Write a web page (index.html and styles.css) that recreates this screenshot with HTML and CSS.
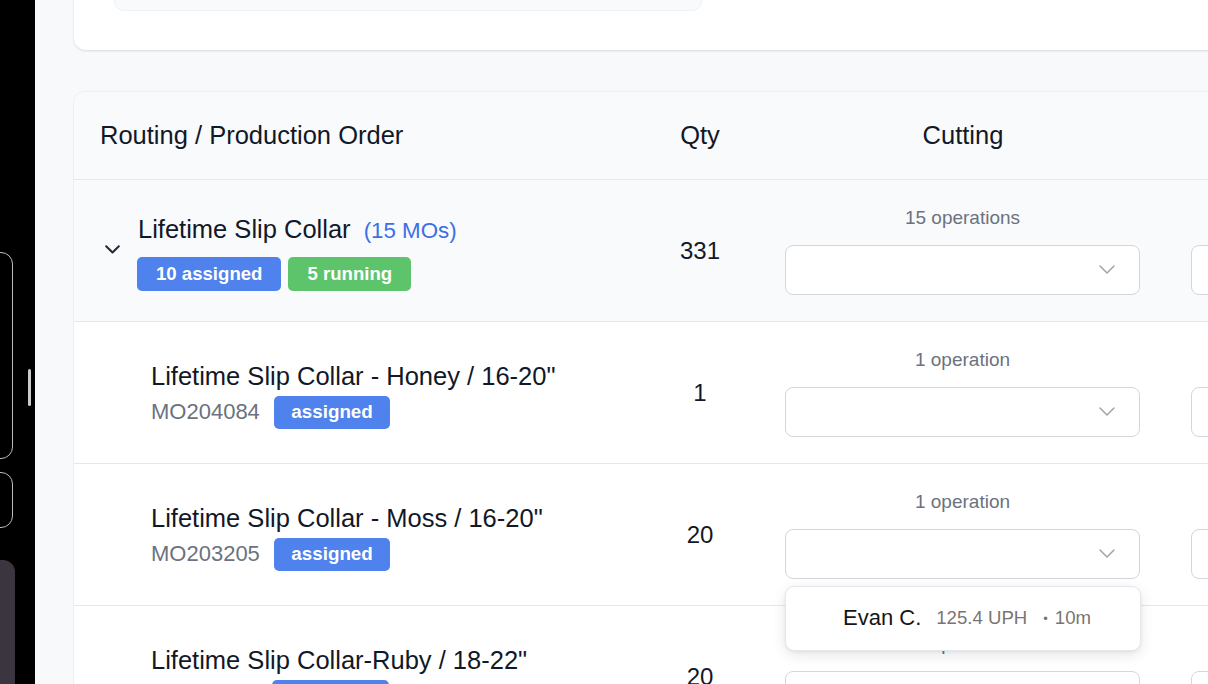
FILE: index.html
```html
<!DOCTYPE html>
<html>
<head>
<meta charset="utf-8">
<link rel="stylesheet" href="styles.css">
</head>
<body>
<aside class="strip">
  <div class="strip-col">
    <div class="ghost ghost-tall"></div>
    <div class="ghost ghost-short"></div>
    <div class="dock"></div>
  </div>
  <div class="handle"></div>
</aside>
<main class="main">
  <section class="top-card">
    <div class="top-inner"></div>
  </section>
  <section class="table">
    <div class="row head">
      <div class="cell c-name">Routing / Production Order</div>
      <div class="cell c-qty">Qty</div>
      <div class="cell c-op">Cutting</div>
      <div class="cell c-op"></div>
    </div>

    <div class="row group">
      <div class="cell c-name">
        <span class="toggle"><svg width="15" height="9" viewBox="0 0 15 9"><path d="M1.2 1.2L7.5 7.5L13.8 1.2" fill="none" stroke="#1f2937" stroke-width="2" stroke-linecap="round" stroke-linejoin="round"/></svg></span>
        <div class="name-block">
          <div class="title">Lifetime Slip Collar <span class="count">(15 MOs)</span></div>
          <div class="badges">
            <span class="badge blue">10 assigned</span>
            <span class="badge green">5 running</span>
          </div>
        </div>
      </div>
      <div class="cell c-qty">331</div>
      <div class="cell c-op">
        <div class="ops">15 operations</div>
        <div class="select-wrap"><div class="select"><svg width="16" height="9" viewBox="0 0 16 9"><path d="M1 1L8 8L15 1" fill="none" stroke="#a3a3a3" stroke-width="1.5" stroke-linecap="round" stroke-linejoin="round"/></svg></div></div>
      </div>
      <div class="cell c-op">
        <div class="ops"></div>
        <div class="select-wrap"><div class="select"></div></div>
      </div>
    </div>

    <div class="row">
      <div class="cell c-name child">
        <div class="name-block">
          <div class="title">Lifetime Slip Collar - Honey / 16-20"</div>
          <div class="mo-line"><span class="mo">MO204084</span><span class="badge blue">assigned</span></div>
        </div>
      </div>
      <div class="cell c-qty">1</div>
      <div class="cell c-op">
        <div class="ops">1 operation</div>
        <div class="select-wrap"><div class="select"><svg width="16" height="9" viewBox="0 0 16 9"><path d="M1 1L8 8L15 1" fill="none" stroke="#a3a3a3" stroke-width="1.5" stroke-linecap="round" stroke-linejoin="round"/></svg></div></div>
      </div>
      <div class="cell c-op">
        <div class="ops"></div>
        <div class="select-wrap"><div class="select"></div></div>
      </div>
    </div>

    <div class="row">
      <div class="cell c-name child">
        <div class="name-block">
          <div class="title">Lifetime Slip Collar - Moss / 16-20"</div>
          <div class="mo-line"><span class="mo">MO203205</span><span class="badge blue">assigned</span></div>
        </div>
      </div>
      <div class="cell c-qty">20</div>
      <div class="cell c-op">
        <div class="ops">1 operation</div>
        <div class="select-wrap">
          <div class="select"><svg width="16" height="9" viewBox="0 0 16 9"><path d="M1 1L8 8L15 1" fill="none" stroke="#a3a3a3" stroke-width="1.5" stroke-linecap="round" stroke-linejoin="round"/></svg></div>
          <div class="menu">
            <span class="who">Evan C.</span>
            <span class="rate">125.4 UPH</span>
            <span class="dot">•</span>
            <span class="dur">10m</span>
          </div>
        </div>
      </div>
      <div class="cell c-op">
        <div class="ops"></div>
        <div class="select-wrap"><div class="select"></div></div>
      </div>
    </div>

    <div class="row">
      <div class="cell c-name child">
        <div class="name-block">
          <div class="title">Lifetime Slip Collar-Ruby / 18-22"</div>
          <div class="mo-line"><span class="mo">MO203117</span><span class="badge blue">assigned</span></div>
        </div>
      </div>
      <div class="cell c-qty">20</div>
      <div class="cell c-op">
        <div class="ops">1 operation</div>
        <div class="select-wrap"><div class="select"><svg width="16" height="9" viewBox="0 0 16 9"><path d="M1 1L8 8L15 1" fill="none" stroke="#a3a3a3" stroke-width="1.5" stroke-linecap="round" stroke-linejoin="round"/></svg></div></div>
      </div>
      <div class="cell c-op">
        <div class="ops"></div>
        <div class="select-wrap"><div class="select"></div></div>
      </div>
    </div>
  </section>
</main>
</body>
</html>
```
FILE: styles.css
```css
* { box-sizing: border-box; }
html, body { margin: 0; padding: 0; }
body {
  width: 1208px;
  height: 684px;
  overflow: hidden;
  display: flex;
  background: #f8f9fb;
  font-family: "Liberation Sans", Arial, sans-serif;
  color: #111827;
}

/* left dark strip */
.strip {
  width: 35px;
  flex: 0 0 35px;
  height: 684px;
  background: #000;
  display: flex;
  align-items: flex-start;
  overflow: hidden;
}
.strip-col {
  width: 15px;
  flex: 0 0 15px;
  padding-top: 252px;
  display: flex;
  flex-direction: column;
}
.ghost {
  width: 33px;
  margin-left: -20px;
  border: 1px solid #bdbdbd;
  border-radius: 12px;
}
.ghost-tall { height: 207px; }
.ghost-short { height: 56px; margin-top: 13px; }
.dock {
  width: 35px;
  margin-left: -20px;
  margin-top: 32px;
  height: 160px;
  border-radius: 12px;
  background: #3b3540;
}
.handle {
  margin-left: 13px;
  margin-top: 369px;
  width: 3px;
  height: 37px;
  border-radius: 2px;
  background: #cbcbcb;
}

/* main */
.main {
  flex: 1;
  min-width: 0;
  overflow: hidden;
  padding-left: 38px;
}
.top-card {
  width: 1300px;
  margin-left: 1px;
  margin-top: -100px;
  height: 150px;
  padding: 40px 0 0 40px;
  background: #fff;
  border-radius: 12px;
  box-shadow: 0 1px 3px rgba(0,0,0,0.09), 0 1px 2px rgba(0,0,0,0.04);
}
.top-inner {
  width: 588px;
  height: 71px;
  background: #f9fafb;
  border: 1px solid #eef0f3;
  border-radius: 10px;
}

.table {
  width: 1600px;
  margin-top: 41px;
  background: #fff;
  border: 1px solid #eceef1;
  border-radius: 12px 0 0 0;
}
.row {
  display: grid;
  grid-template-columns: 566px 120px 406px 406px;
  height: 142px;
  border-bottom: 1px solid #e5e7eb;
}
.row.head {
  height: 88px;
  background: #f9fafb;
  border-radius: 12px 0 0 0;
}
.row.group { background: #f9fafb; }

.cell {
  display: flex;
  align-items: center;
  min-width: 0;
}
.head .cell { font-size: 25.5px; color: #111827; }
.c-qty { justify-content: center; font-size: 24px; color: #111827; }
.c-op {
  flex-direction: column;
  justify-content: center;
  padding: 0 26px 0 25px;
}
.head .c-op { flex-direction: row; justify-content: center; padding: 0 26px; }

.c-name { padding-left: 26px; }
.head .c-name { padding-left: 26px; }
.c-name.child { padding-left: 77px; }
.toggle {
  width: 24px;
  height: 24px;
  display: flex;
  align-items: center;
  justify-content: center;
  margin-right: 14px;
  margin-top: -2px;
}
.toggle svg { display: block; }

.name-block { display: flex; flex-direction: column; }
.title {
  font-size: 25.5px;
  line-height: 38px;
  color: #111827;
  white-space: nowrap;
}
.count {
  font-size: 22.3px;
  color: #3c6fe6;
  margin-left: 6px;
}
.badges { display: flex; gap: 7px; margin-top: 7px; margin-left: -1px; }
.mo-line { display: flex; align-items: center; margin-top: 1px; }
.mo { font-size: 22px; color: #6b7280; margin-right: 14px; }
.badge {
  display: inline-flex;
  align-items: center;
  justify-content: center;
  height: 34px;
  padding: 0 19px;
  border-radius: 5px;
  color: #fff;
  font-weight: 700;
  font-size: 18.6px;
}
.mo-line .badge { height: 33px; padding: 0 17.5px; font-size: 18.8px; }
.badge.blue { background: #4f82ec; }
.badge.green { background: #5ec46b; }

.ops {
  font-size: 19px;
  line-height: 22px;
  height: 22px;
  color: #6b7280;
  margin-bottom: 16px;
  white-space: nowrap;
}
.select-wrap {
  position: relative;
  width: 100%;
}
.select {
  width: 100%;
  height: 50px;
  background: #fff;
  border: 1px solid #d4d6db;
  border-radius: 8px;
  display: flex;
  align-items: center;
  justify-content: flex-end;
  padding-right: 24px;
}
.select svg { display: block; }

.menu {
  position: absolute;
  left: 0;
  right: -1px;
  top: calc(100% + 7px);
  height: 65px;
  background: #fff;
  border: 1px solid #e6e7ea;
  border-radius: 9px;
  box-shadow: 0 4px 14px rgba(0,0,0,0.10), 0 1px 3px rgba(0,0,0,0.06);
  display: flex;
  align-items: center;
  padding-left: 57px;
  z-index: 5;
  white-space: nowrap;
}
.who { font-size: 22px; color: #161616; }
.rate { font-size: 18.6px; color: #7a7572; margin-left: 15px; }
.dot { font-size: 13px; color: #7a7572; margin-left: 16px; }
.dur { font-size: 18.6px; color: #7a7572; margin-left: 7px; }
```
